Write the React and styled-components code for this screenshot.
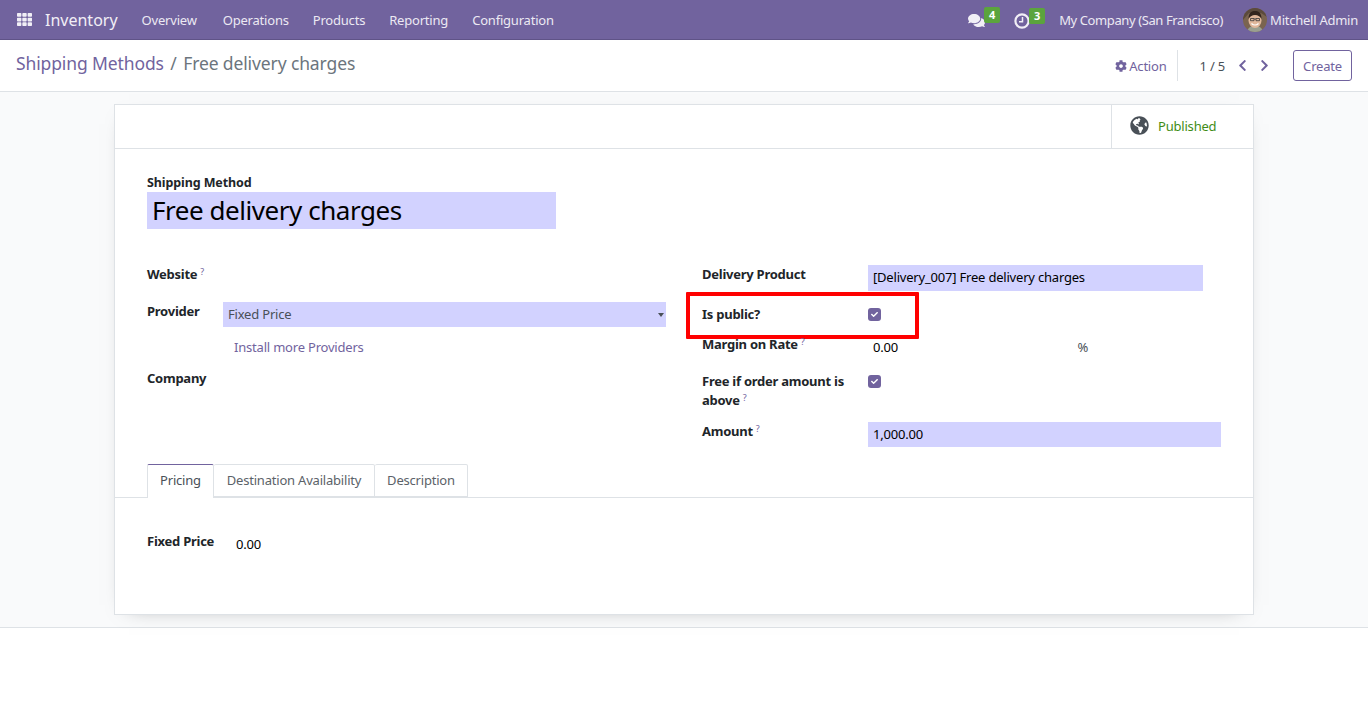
import React from 'react';
import styled, { createGlobalStyle } from 'styled-components';
import { FaTh, FaComments, FaCog, FaChevronLeft, FaChevronRight, FaGlobeAmericas, FaCheck } from 'react-icons/fa';

const Global = createGlobalStyle`
  html, body { margin: 0; padding: 0; background: #fff; }
  body {
    font-family: "Noto Sans", "Open Sans", sans-serif;
    font-size: 13px;
    color: #212529;
    letter-spacing: -0.2px;
  }
`;

const Page = styled.div`
  width: 1368px;
  height: 710px;
  overflow: hidden;
  display: flex;
  flex-direction: column;
`;

const Navbar = styled.header`
  height: 39px;
  background: #71639e;
  border-bottom: 1px solid #5f5387;
  display: flex;
  align-items: center;
  padding: 0 10px 0 17px;
  color: #fff;
  flex: none;
`;

const AppName = styled.span`
  font-size: 16px;
  margin: 0 24px 0 13px;
  color: #f1eff6;
  letter-spacing: 0;
`;

const NavItem = styled.span`
  color: #ece9f3;
  margin-right: ${(p) => p.$gap}px;
`;

const NavRight = styled.div`
  margin-left: auto;
  display: flex;
  align-items: center;
  color: #ece9f3;
`;

const Systray = styled.span`
  position: relative;
  display: flex;
  margin-right: 29px;
  color: #f1eff6;
  font-size: 17px;
  margin-top: 2px;
`;

const ClockIcon = styled.svg`
  width: 16px;
  height: 16px;
  fill: none;
  stroke: currentColor;
`;

const Badge = styled.span`
  position: absolute;
  left: 100%;
  top: -5px;
  margin-left: -1px;
  box-sizing: border-box;
  width: 16px;
  height: 16px;
  background: #5ba43d;
  color: #fff;
  border-radius: 2px;
  font-size: 11px;
  font-weight: 700;
  line-height: 15px;
  text-align: center;
`;

const Company = styled.span`
  letter-spacing: -0.39px;
`;

const UserName = styled.span`
  letter-spacing: -0.25px;
`;

const Avatar = styled.svg`
  width: 24px;
  height: 24px;
  border-radius: 50%;
  margin: 0 3px 0 20px;
`;

const ControlPanel = styled.div`
  height: 51px;
  background: #fff;
  border-bottom: 1px solid #dee2e6;
  display: flex;
  align-items: center;
  padding: 0 16px;
  flex: none;
`;

const Breadcrumb = styled.div`
  font-size: 17.5px;
  letter-spacing: -0.12px;
  color: #6c757d;
  margin-top: -6px;
  span { color: #71639e; }
  i { font-style: normal; margin: 0 6.5px; color: #6c757d; }
`;

const Actions = styled.div`
  margin-left: auto;
  display: flex;
  align-items: center;
  color: #495057;
`;

const ActionLink = styled.span`
  display: flex;
  align-items: center;
  gap: 2px;
  color: #71639e;
  padding-right: 10px;
  height: 31px;
  border-right: 1px solid #dee2e6;
  margin-right: 22px;
`;

const Pager = styled.span`
  margin-right: 11px;
`;

const PagerArrow = styled.span`
  display: flex;
  color: #71639e;
  font-size: 13px;
  margin-right: ${(p) => p.$gap}px;
`;

const CreateButton = styled.button`
  font: inherit;
  letter-spacing: inherit;
  color: #71639e;
  background: #fff;
  border: 1px solid #71639e;
  border-radius: 3px;
  width: 59px;
  height: 31px;
  padding: 0;
`;

const Content = styled.main`
  height: 536px;
  flex: none;
  box-sizing: border-box;
  background: #f9fafb;
  border-bottom: 1px solid #dee2e6;
  padding: 12px 114px 0;
`;

const Sheet = styled.section`
  width: 1140px;
  height: 511px;
  box-sizing: border-box;
  background: #fff;
  border: 1px solid #dee2e6;
  box-shadow: 0 5px 20px -15px rgba(0, 0, 0, 0.5);
`;

const StatusBar = styled.div`
  height: 43px;
  border-bottom: 1px solid #dee2e6;
  display: flex;
  justify-content: flex-end;
`;

const StatButton = styled.div`
  width: 142px;
  box-sizing: border-box;
  border-left: 1px solid #dee2e6;
  display: flex;
  align-items: center;
  gap: 9px;
  padding: 0 0 2px 18px;
  color: #3f8c16;
  svg { color: #495057; font-size: 19px; }
`;

const Body = styled.div`
  padding: 26px 32px 0;
`;

const TitleLabel = styled.label`
  display: block;
  font-weight: 700;
  font-size: 12.5px;
  letter-spacing: -0.1px;
  line-height: 15px;
  margin-bottom: 2px;
`;

const TitleInput = styled.div`
  width: 409px;
  height: 37px;
  box-sizing: border-box;
  background: #d2d2ff;
  color: #000;
  font-size: 26px;
  letter-spacing: -0.45px;
  line-height: 37px;
  padding-left: 5px;
`;

const Columns = styled.div`
  display: grid;
  grid-template-columns: 519px 519px;
  column-gap: 36px;
  margin-top: 36px;
`;

const Row = styled.div`
  position: relative;
  display: grid;
  grid-template-columns: ${(p) => p.$label}px 1fr;
  height: ${(p) => p.$h}px;
`;

const Label = styled.label`
  font-weight: 700;
  line-height: 19px;
  margin-top: ${(p) => p.$top || 0}px;
  letter-spacing: -0.25px;
  sup {
    font-weight: 400;
    font-size: 9px;
    color: #71639e;
    margin-left: 3px;
    line-height: 0;
    vertical-align: 4px;
  }
`;

const FieldValue = styled.div`
  box-sizing: border-box;
  height: ${(p) => p.$h || 25}px;
  width: ${(p) => p.$w || '100%'};
  background: ${(p) => (p.$required ? '#d2d2ff' : 'transparent')};
  color: ${(p) => p.$color || '#000'};
  line-height: 25px;
  padding-left: 5px;
  position: relative;
`;

const Caret = styled.span`
  position: absolute;
  right: 2px;
  top: 11px;
  border: 3px solid transparent;
  border-top: 4px solid #495057;
  border-bottom: 0;
`;

const LinkText = styled.div`
  color: #71639e;
  padding: 11px 0 0 11px;
`;

const Checkbox = styled.span`
  display: flex;
  align-items: center;
  justify-content: center;
  width: 13px;
  height: 13px;
  border-radius: 3px;
  background: #71639e;
  color: #fff;
  font-size: 7px;
  margin-top: ${(p) => p.$top}px;
`;

const Highlight = styled.div`
  position: absolute;
  left: -16px;
  top: -10px;
  width: 233px;
  height: 47px;
  box-sizing: border-box;
  border: 4px solid #ff0000;
  border-radius: 1px;
  pointer-events: none;
`;

const PercentRow = styled.div`
  display: flex;
  justify-content: space-between;
  width: 215px;
  color: #495057;
  line-height: 25px;
  padding-left: 5px;
  span:first-child { color: #000; }
`;

const Tabs = styled.nav`
  display: flex;
  height: 33px;
  margin-top: 17px;
  padding-left: 32px;
  border-bottom: 1px solid #dee2e6;
`;

const Tab = styled.div`
  box-sizing: border-box;
  height: ${(p) => (p.$active ? 34 : 33)}px;
  width: ${(p) => p.$w}px;
  line-height: 31px;
  text-align: center;
  background: #fff;
  color: ${(p) => (p.$active ? '#495057' : '#5b6268')};
  border: 1px solid #dee2e6;
  border-bottom: ${(p) => (p.$active ? '0' : '1px solid #dee2e6')};
  border-left-width: ${(p) => (p.$first ? 1 : 0)}px;
  border-top-color: ${(p) => (p.$active ? '#71639e' : '#dee2e6')};
  border-radius: 2px 2px 0 0;
  white-space: nowrap;
`;

const TabPane = styled.div`
  padding: 34px 32px 0;
  display: grid;
  grid-template-columns: 84px 1fr;
`;

const menu = [
  ['Overview', 26],
  ['Operations', 24],
  ['Products', 24],
  ['Reporting', 24],
  ['Configuration', 0],
];

export default function App() {
  return (
    <Page>
      <Global />
      <Navbar>
        <FaTh size={15} color="#f1eff6" />
        <AppName>Inventory</AppName>
        {menu.map(([item, gap]) => (
          <NavItem key={item} $gap={gap}>{item}</NavItem>
        ))}
        <NavRight>
          <Systray>
            <FaComments />
            <Badge>4</Badge>
          </Systray>
          <Systray>
            <ClockIcon viewBox="0 0 16 16">
              <circle cx="8" cy="8" r="6.6" strokeWidth="2.2" />
              <path d="M8.500 4v4.800H5" strokeWidth="1.500" />
            </ClockIcon>
            <Badge>3</Badge>
          </Systray>
          <Company>My Company (San Francisco)</Company>
          <Avatar viewBox="0 0 24 24">
            <rect width="24" height="24" fill="#7a6450" />
            <path d="M0 0h24v9L18 5H6L0 12z" fill="#5b4a3c" />
            <path d="M4 24c1-5 4-6 8-6s7 1 8 6z" fill="#9a9f90" />
            <ellipse cx="12" cy="12.500" rx="6.500" ry="7.500" fill="#e0b79b" />
            <path d="M5.500 11C5.500 4.500 9 3 12 3s6.500 1.500 6.500 8c-2-3-3.500-4-6.500-4s-4.500 1-6.500 4z" fill="#33251d" />
            <path d="M7.500 10.500h3.500v2.200H7.500zM13 10.500h3.500v2.200H13zM11 11h2" fill="none" stroke="#3a3a3a" strokeWidth=".8" />
            <path d="M8.500 15.500c2 2 5 2 7 0" stroke="#fff" strokeWidth="1.200" fill="none" />
          </Avatar>
          <UserName>Mitchell Admin</UserName>
        </NavRight>
      </Navbar>
      <ControlPanel>
        <Breadcrumb>
          <span>Shipping Methods</span>
          <i>/</i>
          Free delivery charges
        </Breadcrumb>
        <Actions>
          <ActionLink>
            <FaCog size={12} />
            Action
          </ActionLink>
          <Pager>1 / 5</Pager>
          <PagerArrow $gap={9}><FaChevronLeft /></PagerArrow>
          <PagerArrow $gap={22}><FaChevronRight /></PagerArrow>
          <CreateButton>Create</CreateButton>
        </Actions>
      </ControlPanel>
      <Content>
        <Sheet>
          <StatusBar>
            <StatButton>
              <FaGlobeAmericas />
              Published
            </StatButton>
          </StatusBar>
          <Body>
            <TitleLabel>Shipping Method</TitleLabel>
            <TitleInput>Free delivery charges</TitleInput>
            <Columns>
              <div>
                <Row $label={76} $h={37}>
                  <Label>Website<sup>?</sup></Label>
                </Row>
                <Row $label={76} $h={25}>
                  <Label>Provider</Label>
                  <FieldValue $required $color="#495057">
                    Fixed Price
                    <Caret />
                  </FieldValue>
                </Row>
                <Row $label={76} $h={42}>
                  <span />
                  <LinkText>Install more Providers</LinkText>
                </Row>
                <Row $label={76} $h={30}>
                  <Label>Company</Label>
                </Row>
              </div>
              <div>
                <Row $label={166} $h={37}>
                  <Label>Delivery Product</Label>
                  <FieldValue $required $w="335px" $h={26}>[Delivery_007] Free delivery charges</FieldValue>
                </Row>
                <Row $label={166} $h={33}>
                  <Label $top={3}>Is public?</Label>
                  <Checkbox $top={6}><FaCheck /></Checkbox>
                  <Highlight />
                </Row>
                <Row $label={166} $h={37}>
                  <Label>Margin on Rate<sup>?</sup></Label>
                  <PercentRow><span>0.00</span><span>%</span></PercentRow>
                </Row>
                <Row $label={166} $h={50}>
                  <Label>Free if order amount is above<sup>?</sup></Label>
                  <Checkbox $top={3}><FaCheck /></Checkbox>
                </Row>
                <Row $label={166} $h={25}>
                  <Label>Amount<sup>?</sup></Label>
                  <FieldValue $required>1,000.00</FieldValue>
                </Row>
              </div>
            </Columns>
          </Body>
          <Tabs>
            <Tab $active $first $w={67}>Pricing</Tab>
            <Tab $w={161}>Destination Availability</Tab>
            <Tab $w={93}>Description</Tab>
          </Tabs>
          <TabPane>
            <Label>Fixed Price</Label>
            <FieldValue>0.00</FieldValue>
          </TabPane>
        </Sheet>
      </Content>
    </Page>
  );
}
